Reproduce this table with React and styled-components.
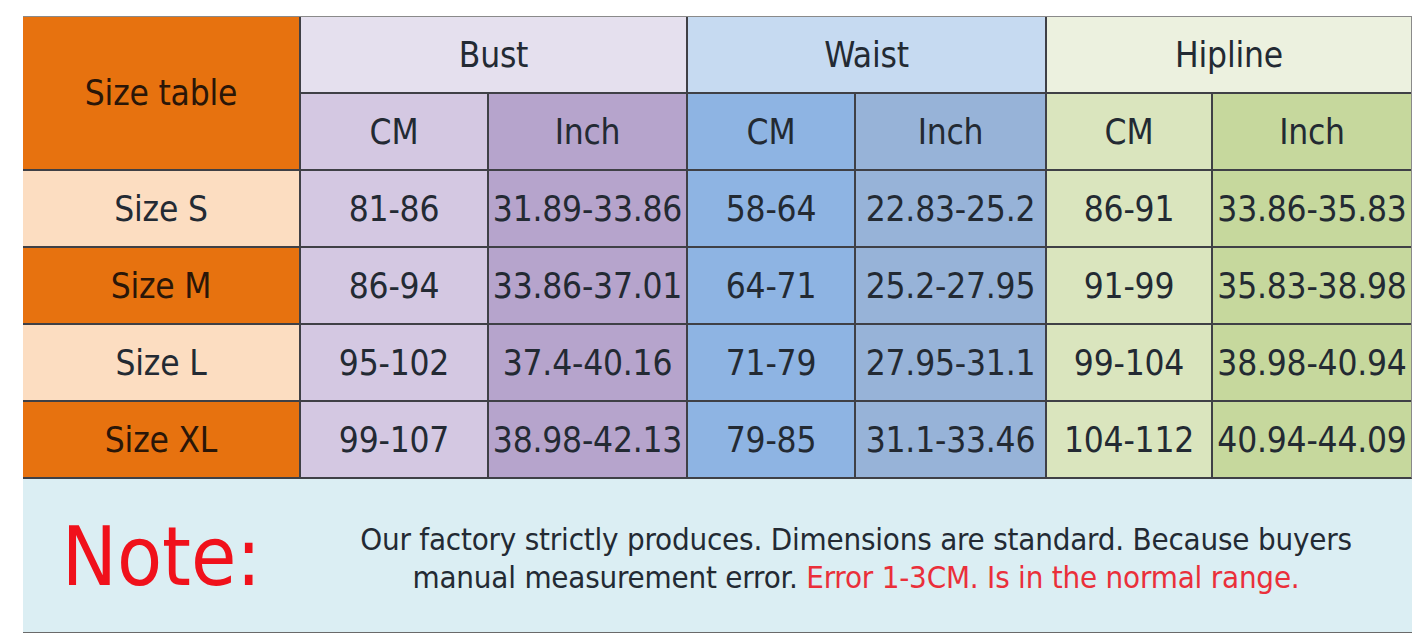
import styled, { createGlobalStyle } from "styled-components";

const GlobalStyle = createGlobalStyle`
  html, body {
    margin: 0;
    padding: 0;
    background: #ffffff;
  }
  body {
    font-family: "DejaVu Sans Condensed", "DejaVu Sans", "Liberation Sans", sans-serif;
    font-stretch: condensed;
    color: #232a33;
  }
`

// column tints, per group
const tints = {
  size: "#e7720f",
  sizeLight: "#fcddc1",
  bustHead: "#e5e0ee",
  bustCm: "#d4c8e2",
  bustInch: "#b6a4cc",
  waistHead: "#c6daf1",
  waistCm: "#8eb4e3",
  waistInch: "#97b3d8",
  hipHead: "#ecf1df",
  hipCm: "#dae5be",
  hipInch: "#c6d89d",
}

const rows = [
  { label: "Size S", light: true, values: ["81-86", "31.89-33.86", "58-64", "22.83-25.2", "86-91", "33.86-35.83"] },
  { label: "Size M", light: false, values: ["86-94", "33.86-37.01", "64-71", "25.2-27.95", "91-99", "35.83-38.98"] },
  { label: "Size L", light: true, values: ["95-102", "37.4-40.16", "71-79", "27.95-31.1", "99-104", "38.98-40.94"] },
  { label: "Size XL", light: false, values: ["99-107", "38.98-42.13", "79-85", "31.1-33.46", "104-112", "40.94-44.09"] },
]

const valueTints = ["bustCm", "bustInch", "waistCm", "waistInch", "hipCm", "hipInch"]

const Page = styled.div`
  padding: 16px 0 0 23px;
`

const Sheet = styled.div`
  width: 1389px;
`

const Grid = styled.div`
  display: grid;
  grid-template-columns: 276px 186px 197px 166px 189px 164px 198px;
  grid-auto-rows: 75px;
  gap: 2px;
  background: #3f4046;
  border-top: 1px solid #8a8a8a;
  border-right: 1px solid #8a8a8a;
  border-bottom: 2px solid #3f4046;
`

const Cell = styled.div`
  display: flex;
  align-items: center;
  justify-content: center;
  background: ${(p) => tints[p.$tint]};
  grid-column: ${(p) => (p.$colSpan ? `span ${p.$colSpan}` : "auto")};
  grid-row: ${(p) => (p.$rowSpan ? `span ${p.$rowSpan}` : "auto")};
  font-size: 35px;
  letter-spacing: -0.2px;
  color: ${(p) => (p.$dark ? "#2a1608" : "#232a33")};
  white-space: nowrap;
`

const Note = styled.div`
  display: grid;
  grid-template-columns: 277px 1fr;
  height: 153px;
  background: #dbeef3;
  border-bottom: 1px solid #6a6a6a;
`

const NoteLabel = styled.div`
  display: flex;
  align-items: center;
  justify-content: center;
  color: #f0111b;
  font-size: 82px;
  padding-top: 2px;
`

const NoteText = styled.p`
  margin: 0;
  align-self: center;
  text-align: center;
  font-size: 31px;
  line-height: 38px;
  letter-spacing: -0.2px;
  color: #232a33;
  padding-top: 4px;
`

const Warn = styled.span`
  color: #ea2f3a;
`

export default function App() {
  return (
    <>
      <GlobalStyle />
      <Page>
        <Sheet>
          <Grid>
            <Cell $tint="size" $rowSpan={2} $dark>Size table</Cell>
            <Cell $tint="bustHead" $colSpan={2}>Bust</Cell>
            <Cell $tint="waistHead" $colSpan={2}>Waist</Cell>
            <Cell $tint="hipHead" $colSpan={2}>Hipline</Cell>
            <Cell $tint="bustCm">CM</Cell>
            <Cell $tint="bustInch">Inch</Cell>
            <Cell $tint="waistCm">CM</Cell>
            <Cell $tint="waistInch">Inch</Cell>
            <Cell $tint="hipCm">CM</Cell>
            <Cell $tint="hipInch">Inch</Cell>
            {rows.map((row) => (
              <>
                <Cell key={row.label} $tint={row.light ? "sizeLight" : "size"} $dark={!row.light}>
                  {row.label}
                </Cell>
                {row.values.map((v, i) => (
                  <Cell key={row.label + i} $tint={valueTints[i]}>{v}</Cell>
                ))}
              </>
            ))}
          </Grid>
          <Note>
            <NoteLabel>Note:</NoteLabel>
            <NoteText>
              Our factory strictly produces. Dimensions are standard. Because buyers
              <br />
              manual measurement error. <Warn>Error 1-3CM. Is in the normal range.</Warn>
            </NoteText>
          </Note>
        </Sheet>
      </Page>
    </>
  )
}
